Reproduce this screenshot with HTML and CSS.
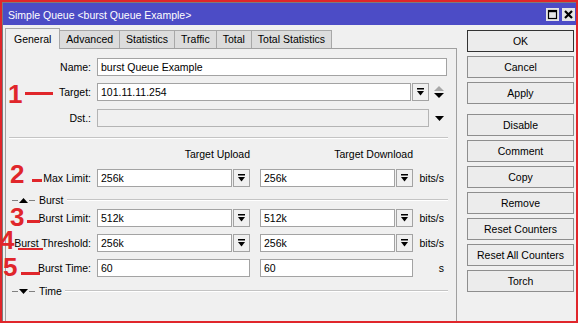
FILE: index.html
```html
<!DOCTYPE html>
<html lang="en">
<head>
    <meta charset="UTF-8">
    <title>Simple Queue</title>
    <link rel="stylesheet" href="styles.css">
</head>
<body>
<div class="frame">
    <div class="window">
        <div class="titlebar">
            <span class="title">Simple Queue &lt;burst Queue Example&gt;</span>
            <span class="tb-btns">
                <span class="tb-btn">
                    <svg width="11" height="11" viewBox="0 0 11 11"><rect x="1.5" y="1.5" width="8" height="8" fill="none" stroke="#000" stroke-width="1.2"/><rect x="1" y="1" width="9" height="2.2" fill="#000"/></svg>
                </span>
                <span class="tb-btn">
                    <svg width="11" height="11" viewBox="0 0 11 11"><path d="M2 2 L9 9 M9 2 L2 9" stroke="#000" stroke-width="2.2"/></svg>
                </span>
            </span>
        </div>

        <div class="main">
            <div class="left">
                <div class="tabs">
                    <span class="tab active">General</span>
                    <span class="tab">Advanced</span>
                    <span class="tab">Statistics</span>
                    <span class="tab">Traffic</span>
                    <span class="tab">Total</span>
                    <span class="tab">Total Statistics</span>
                </div>

                <div class="panel">
                    <div class="row">
                        <label class="lbl">Name:</label>
                        <input class="field name-field" type="text" value="burst Queue Example">
                    </div>
                    <div class="row row-target">
                        <label class="lbl">Target:</label>
                        <input class="field target-field" type="text" value="101.11.11.254">
                        <span class="dd-btn"><svg width="7" height="8" viewBox="0 0 7 8"><rect x="0" y="0" width="7" height="1.5"/><polygon points="0,3 7,3 3.5,7.5"/></svg></span>
                        <span class="spinner"><svg width="12" height="14" viewBox="0 0 12 14"><polygon points="1,6 11,6 6,1" fill="#a8a8a8"/><polygon points="1,8 11,8 6,13" fill="#000"/></svg></span>
                    </div>
                    <div class="row row-dst">
                        <label class="lbl">Dst.:</label>
                        <input class="field dst-field" type="text" disabled>
                        <span class="dst-arrow"><svg width="9" height="5" viewBox="0 0 9 5"><polygon points="0,0 9,0 4.5,5"/></svg></span>
                    </div>

                    <div class="sep"></div>

                    <div class="row heads">
                        <span class="lbl"></span>
                        <span class="col head">Target Upload</span>
                        <span class="col head">Target Download</span>
                    </div>
                    <div class="row row-max">
                        <label class="lbl">Max Limit:</label>
                        <span class="col"><input class="field" type="text" value="256k"><span class="dd-btn"><svg width="7" height="8" viewBox="0 0 7 8"><rect x="0" y="0" width="7" height="1.5"/><polygon points="0,3 7,3 3.5,7.5"/></svg></span></span>
                        <span class="col"><input class="field" type="text" value="256k"><span class="dd-btn"><svg width="7" height="8" viewBox="0 0 7 8"><rect x="0" y="0" width="7" height="1.5"/><polygon points="0,3 7,3 3.5,7.5"/></svg></span></span>
                        <span class="unit">bits/s</span>
                    </div>

                    <div class="grp grp-burst">
                        <span class="tick"></span>
                        <svg class="tri" width="9" height="5" viewBox="0 0 9 5"><polygon points="0,5 9,5 4.5,0"/></svg>
                        <span class="tick"></span>
                        <span class="grp-title">Burst</span>
                        <span class="grp-line"></span>
                    </div>
                    <div class="row row-blimit">
                        <label class="lbl">Burst Limit:</label>
                        <span class="col"><input class="field" type="text" value="512k"><span class="dd-btn"><svg width="7" height="8" viewBox="0 0 7 8"><rect x="0" y="0" width="7" height="1.5"/><polygon points="0,3 7,3 3.5,7.5"/></svg></span></span>
                        <span class="col"><input class="field" type="text" value="512k"><span class="dd-btn"><svg width="7" height="8" viewBox="0 0 7 8"><rect x="0" y="0" width="7" height="1.5"/><polygon points="0,3 7,3 3.5,7.5"/></svg></span></span>
                        <span class="unit">bits/s</span>
                    </div>
                    <div class="row">
                        <label class="lbl">Burst Threshold:</label>
                        <span class="col"><input class="field" type="text" value="256k"><span class="dd-btn"><svg width="7" height="8" viewBox="0 0 7 8"><rect x="0" y="0" width="7" height="1.5"/><polygon points="0,3 7,3 3.5,7.5"/></svg></span></span>
                        <span class="col"><input class="field" type="text" value="256k"><span class="dd-btn"><svg width="7" height="8" viewBox="0 0 7 8"><rect x="0" y="0" width="7" height="1.5"/><polygon points="0,3 7,3 3.5,7.5"/></svg></span></span>
                        <span class="unit">bits/s</span>
                    </div>
                    <div class="row">
                        <label class="lbl">Burst Time:</label>
                        <span class="col"><input class="field" type="text" value="60"></span>
                        <span class="col"><input class="field" type="text" value="60"></span>
                        <span class="unit">s</span>
                    </div>

                    <div class="grp grp-time">
                        <span class="tick"></span>
                        <svg class="tri" width="9" height="5" viewBox="0 0 9 5"><polygon points="0,0 9,0 4.5,5"/></svg>
                        <span class="tick"></span>
                        <span class="grp-title">Time</span>
                        <span class="grp-line"></span>
                    </div>
                </div>
            </div>

            <div class="buttons">
                <button class="btn default">OK</button>
                <button class="btn">Cancel</button>
                <button class="btn">Apply</button>
                <button class="btn spaced">Disable</button>
                <button class="btn">Comment</button>
                <button class="btn">Copy</button>
                <button class="btn">Remove</button>
                <button class="btn">Reset Counters</button>
                <button class="btn">Reset All Counters</button>
                <button class="btn">Torch</button>
            </div>
        </div>
    </div>

    <!-- red annotations drawn over the screenshot -->
    <div class="notes">
        <span class="num n1">1</span><span class="dash d1"></span>
        <span class="num n2">2</span><span class="dash d2"></span>
        <span class="num n3">3</span><span class="dash d3"></span>
        <span class="num n4">4</span><span class="dash d4"></span>
        <span class="num n5">5</span><span class="dash d5"></span>
    </div>
</div>
</body>
</html>
```

FILE: styles.css
```css
* {
    box-sizing: border-box;
}
body {
    margin: 0;
    background: #fff;
    font-family: "Liberation Sans", Arial, sans-serif;
    font-size: 10.5px;
    color: #000;
}
.frame {
    position: relative;
    width: 578px;
    height: 323px;
    border: 2px solid #e0262b;
    background: #f0f0f0;
    overflow: hidden;
}
.window {
    height: 100%;
    border: 1px solid #7c7c7c;
    border-bottom: none;
    border-right: none;
    display: flex;
    flex-direction: column;
}
.titlebar {
    height: 22px;
    background: #4c4cc6;
    color: #fff;
    display: flex;
    align-items: center;
    justify-content: space-between;
    padding: 0 1px 0 5px;
}
.title {
    padding-top: 1px;
}
.tb-btns {
    display: flex;
    gap: 3px;
}
.tb-btn {
    width: 13px;
    height: 13px;
    background: #e6e6e6;
    display: flex;
    align-items: center;
    justify-content: center;
}

.main {
    flex: 1;
    display: flex;
    padding-top: 3px;
}
.left {
    margin-left: 2px;
    width: 452px;
    display: flex;
    flex-direction: column;
}
.tabs {
    height: 20px;
    display: flex;
    align-items: flex-end;
    position: relative;
    z-index: 1;
}
.tab {
    height: 18px;
    line-height: 17px;
    padding: 0 6px;
    background: #dcdcdc;
    border-top: 1px solid #a8a8a8;
    border-right: 1px solid #a8a8a8;
}
.tab.active {
    height: 21px;
    margin-bottom: -1px;
    line-height: 20px;
    padding: 0 8px;
    background: #f0f0f0;
    border-left: 1px solid #a8a8a8;
}
.panel {
    flex: 1;
    border: 1px solid #a0a0a0;
    border-bottom: none;
    padding-top: 9px;
}

.row {
    display: flex;
    align-items: center;
    height: 18px;
    margin-top: 7px;
}
.row:first-child {
    margin-top: 0;
}
.row-dst {
    margin-top: 8px;
}
.row-blimit {
    margin-top: 3px;
}
.lbl {
    width: 85px;
    margin-right: 6px;
    text-align: right;
    white-space: nowrap;
}
.field {
    height: 18px;
    border: 1px solid #a3a3a3;
    background: #fff;
    font: inherit;
    color: #000;
    padding: 0 3px;
    margin: 0;
    min-width: 0;
    outline: none;
}
.name-field {
    width: 350px;
}
.target-field {
    width: 314px;
}
.dst-field {
    width: 332px;
    background: #f0f0f0;
    border-color: #b4b4b4;
}
.dd-btn {
    width: 17px;
    height: 18px;
    margin-left: 1px;
    border: 1px solid #a3a3a3;
    background: #f0f0f0;
    display: flex;
    align-items: center;
    justify-content: center;
    flex: none;
}
.spinner {
    margin-left: 4px;
    display: flex;
}
.dst-arrow {
    margin-left: 6px;
    display: flex;
}

.sep {
    margin: 10px 8px 0 3px;
    height: 2px;
    border-top: 1px solid #c4c4c4;
    border-bottom: 1px solid #fff;
}
.heads {
    height: 16px;
}
.col {
    width: 153px;
    display: flex;
    align-items: center;
}
.col + .col {
    margin-left: 10px;
}
.col .field {
    flex: 1;
}
.head {
    justify-content: flex-end;
}
.unit {
    width: 31px;
    text-align: right;
}

.grp {
    height: 12px;
    margin: 7px 8px 0 0;
    padding-left: 6px;
    display: flex;
    align-items: center;
}
.grp-time {
    margin-top: 8px;
}
.tick {
    width: 6px;
    height: 1px;
    background: #808080;
}
.tri {
    margin: 0 1px;
}
.grp-title {
    margin: 0 3px 0 4px;
}
.grp-line {
    flex: 1;
    height: 2px;
    border-top: 1px solid #c4c4c4;
    border-bottom: 1px solid #fff;
}

.buttons {
    margin-left: 10px;
    width: 107px;
    padding-top: 2px;
    display: flex;
    flex-direction: column;
    gap: 4px;
}
.btn {
    height: 22px;
    padding: 0;
    border: 1px solid #8e8e8e;
    background: #ececec;
    font: inherit;
    color: #000;
}
.btn.default {
    border-color: #333;
}
.btn.spaced {
    margin-top: 6px;
}

.notes {
    position: absolute;
    top: -2px;
    left: -2px;
}
.num {
    position: absolute;
    font-weight: bold;
    font-size: 26px;
    line-height: 26px;
    color: #e0262b;
}
.dash {
    position: absolute;
    height: 3px;
    background: #e0262b;
}
.n1 { left: 8px; top: 81px; }
.n2 { left: 10px; top: 161px; }
.n3 { left: 10px; top: 204px; }
.n4 { left: 0; top: 227px; }
.n5 { left: 3px; top: 254px; }
.d1 { left: 25px; top: 92px; width: 28px; }
.d2 { left: 32px; top: 179px; width: 10px; }
.d3 { left: 27px; top: 220px; width: 13px; }
.d4 { left: 18px; top: 248px; width: 25px; height: 2px; }
.d5 { left: 21px; top: 272px; width: 19px; }
```
